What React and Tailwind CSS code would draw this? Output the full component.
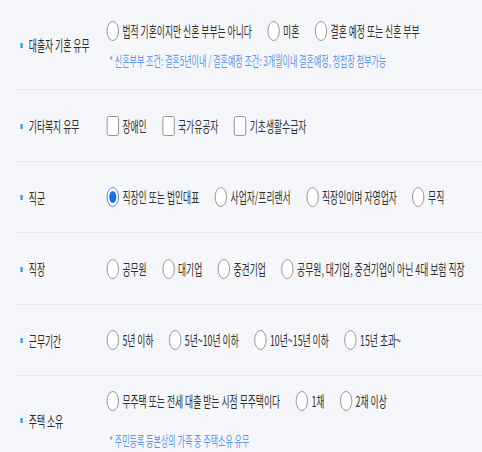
import React from "react";

const rows = [
  {
    label: "대출자 기혼 유무",
    type: "radio",
    options: ["법적 기혼이지만 신혼 부부는 아니다", "미혼", "결혼 예정 또는 신혼 부부"],
    note: "* 신혼부부 조건: 결혼5년이내 / 결혼예정 조건: 3개월이내 결혼예정, 청첩장 첨부가능",
    height: "h-[90px]",
    noteGap: "mt-[10px]",
  },
  {
    label: "기타복지 유무",
    type: "check",
    options: ["장애인", "국가유공자", "기초생활수급자"],
    height: "h-[72px]",
  },
  {
    label: "직군",
    type: "radio",
    options: ["직장인 또는 법인대표", "사업자/프리랜서", "직장인이며 자영업자", "무직"],
    selected: 0,
    height: "h-[71px]",
  },
  {
    label: "직장",
    type: "radio",
    options: ["공무원", "대기업", "중견기업", "공무원, 대기업, 중견기업이 아닌 4대 보험 직장"],
    height: "h-[72px]",
  },
  {
    label: "근무기간",
    type: "radio",
    options: ["5년 이하", "5년~10년 이하", "10년~15년 이하", "15년 초과~"],
    height: "h-[71px]",
  },
  {
    label: "주택 소유",
    type: "radio",
    options: ["무주택 또는 전세 대출 받는 시점 무주택이다", "1채", "2채 이상"],
    note: "* 주민등록 등본상의 가족 중 주택소유 유무",
    height: "h-[88px]",
    noteGap: "mt-[20px]",
  },
];

function Radio({ checked }) {
  if (checked) {
    return (
      <span className="flex h-5 w-5 shrink-0 items-center justify-center rounded-full border-[1.5px] border-[#1a6fe6] bg-white">
        <span className="h-3 w-3 rounded-full bg-[#1a6fe6]" />
      </span>
    );
  }
  return <span className="h-5 w-5 shrink-0 rounded-full border border-[#7d7d7d] bg-white" />;
}

function Check() {
  return <span className="h-5 w-5 shrink-0 rounded-[3px] border border-[#7d7d7d] bg-white" />;
}

function Row({ row, last }) {
  return (
    <div
      className={`ml-[23px] flex items-center ${row.height} ${last ? "" : "border-b border-[#e7e9ee]"}`}
    >
      <div className="flex w-[155px] shrink-0 items-center pl-[11px] pt-[2px]">
        <span className="h-[5px] w-1 bg-[#3a9de6]" />
        <span className="ml-[10px] text-[14.7px] text-[#2b2b2b]">{row.label}</span>
      </div>
      <div className="flex flex-col">
        <div className="flex h-5 items-center gap-x-[26px]">
          {row.options.map((opt, i) => (
            <label key={opt} className="flex items-center gap-[6px]">
              {row.type === "check" ? <Check /> : <Radio checked={row.selected === i} />}
              <span className="text-[14.7px] leading-5 text-[#2f2f2f] whitespace-nowrap">{opt}</span>
            </label>
          ))}
        </div>
        {row.note && (
          <p className={`${row.noteGap} pl-1 text-[13.4px] leading-[18px] text-[#5a97e8] whitespace-nowrap`}>
            {row.note}
          </p>
        )}
      </div>
    </div>
  );
}

export default function App() {
  return (
    <div
      className="h-[452px] w-[482px] overflow-hidden bg-[#f5f6fa]"
      style={{ fontFamily: '"Noto Sans CJK KR", "Noto Sans", sans-serif' }}
    >
      <div className="w-[803px] origin-top-left scale-x-[0.6]">
        {rows.map((row, i) => (
          <Row key={row.label} row={row} last={i === rows.length - 1} />
        ))}
      </div>
    </div>
  );
}
